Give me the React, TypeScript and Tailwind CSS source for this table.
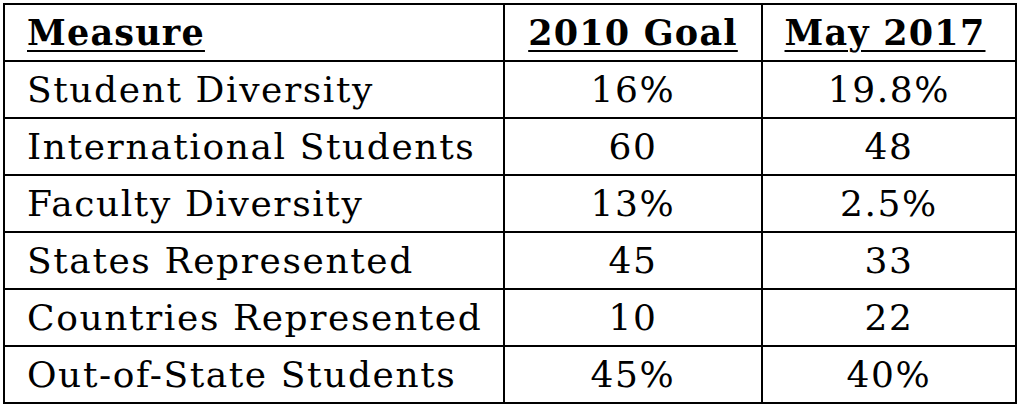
import React from "react";

const rows: [string, string, string][] = [
  ["Student Diversity", "16%", "19.8%"],
  ["International Students", "60", "48"],
  ["Faculty Diversity", "13%", "2.5%"],
  ["States Represented", "45", "33"],
  ["Countries Represented", "10", "22"],
  ["Out-of-State Students", "45%", "40%"],
];

export default function App() {
  return (
    <div
      className="w-[1019px] h-[408px] bg-white p-[3px] text-black"
      style={{ fontFamily: '"DejaVu Serif", serif' }}
    >
      <table className="border-collapse w-[1012px] table-fixed text-[36px] tracking-[1.6px] leading-none">
        <colgroup>
          <col className="w-[500px]" />
          <col className="w-[258px]" />
          <col className="w-[254px]" />
        </colgroup>
        <thead>
          <tr className="h-[57px] text-[35px] tracking-[1.2px]">
            <th className="border-2 border-black text-left pl-[22px] font-bold">
              <span className="underline decoration-2 underline-offset-[5px]">Measure</span>
            </th>
            <th className="border-2 border-black text-center font-bold">
              <span className="underline decoration-2 underline-offset-[5px]">2010 Goal</span>
            </th>
            <th className="border-2 border-black text-center font-bold pr-[8px]">
              <span className="underline decoration-2 underline-offset-[5px]">May 2017</span>
            </th>
          </tr>
        </thead>
        <tbody>
          {rows.map((r) => (
            <tr key={r[0]} className="h-[57px]">
              <td className="border-2 border-black text-left pl-[22px]">{r[0]}</td>
              <td className="border-2 border-black text-center">{r[1]}</td>
              <td className="border-2 border-black text-center">{r[2]}</td>
            </tr>
          ))}
        </tbody>
      </table>
    </div>
  );
}
